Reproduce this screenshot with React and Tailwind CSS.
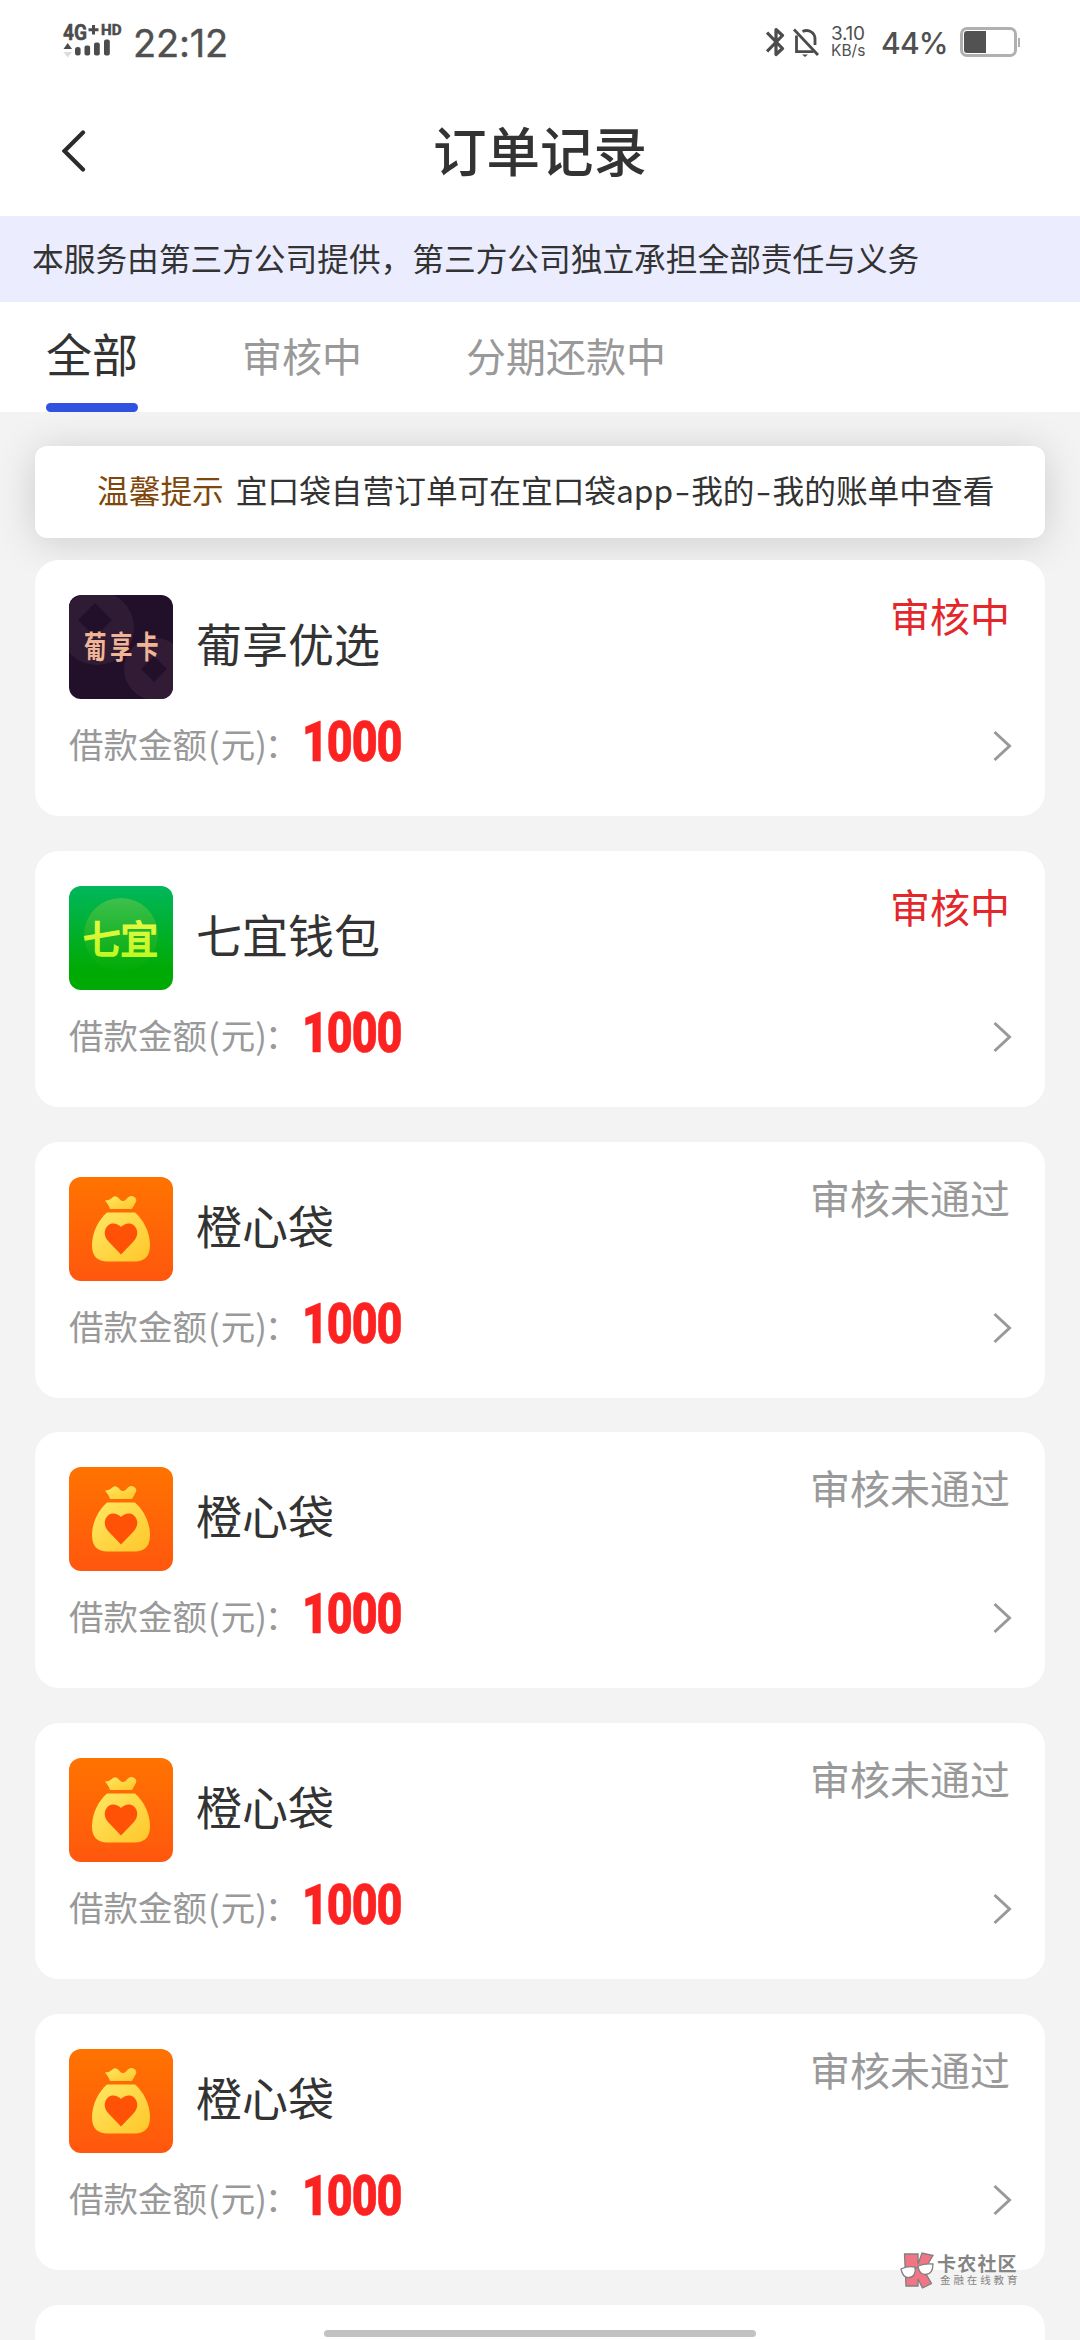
const orders = [
  { id: 1, name: "葡享优选", amount: 1000, status: "审核中", logo: "puxiang" },
  { id: 2, name: "七宜钱包", amount: 1000, status: "审核中", logo: "qiyi" },
  { id: 3, name: "橙心袋", amount: 1000, status: "审核未通过", logo: "chengxin" },
  { id: 4, name: "橙心袋", amount: 1000, status: "审核未通过", logo: "chengxin" },
  { id: 5, name: "橙心袋", amount: 1000, status: "审核未通过", logo: "chengxin" },
  { id: 6, name: "橙心袋", amount: 1000, status: "审核未通过", logo: "chengxin" },
];

const SignalIcon = () => (
  <svg width="60" height="36" viewBox="0 0 60 36" fill="#4c4c4c" className="shrink-0 overflow-visible">
    <g fontFamily="Roboto, sans-serif" fontWeight="700">
      <text x="0" y="15.500" fontSize="21.5" stroke="#4c4c4c" strokeWidth="0.5" textLength="24" lengthAdjust="spacingAndGlyphs">4G</text>
      <text x="38" y="10.500" fontSize="14" stroke="#4c4c4c" strokeWidth="0.5" textLength="20.5" lengthAdjust="spacingAndGlyphs">HD</text>
    </g>
    <path d="M29 1h3v3.300h3.500v3H32v3.200h-3V7.300h-3.500v-3H29z" />
    <path d="M4.700 19 9 25H.5z" />
    <path d="M4.700 33.500 9 28H.5z" fill="#dcdcdc" />
    <rect x="12" y="23" width="5.600" height="8.500" rx="2.500" />
    <rect x="21.500" y="21.500" width="5.600" height="10" rx="2" />
    <rect x="31" y="18.500" width="5.800" height="13" rx="2" />
    <rect x="41" y="15.500" width="5.800" height="16" rx="2" />
  </svg>
);

const StatusBar = () => (
  <div className="flex h-[84px] items-center pl-[63px] pr-[60px] text-[#505050] font-[Inter,'Noto_Sans_CJK_SC',sans-serif]">
    <SignalIcon />
    <span className="ml-[10px] mt-px text-[38px] leading-[40px] tracking-[-0.2px] [-webkit-text-stroke:0.4px_#505050]">22:12</span>

    <div className="ml-auto flex items-center">
      <svg width="19" height="30" viewBox="0 0 19 30" fill="none" stroke="#4c4c4c" strokeWidth="3.200" strokeLinejoin="round">
        <path d="M1 5.500 16.500 21.500 10 27.500V2.500l6.500 6L1 24.500" />
      </svg>
      <svg width="26" height="30" viewBox="0 0 26 30" fill="none" stroke="#4c4c4c" strokeWidth="2.800" className="ml-2">
        <path d="M1 2.500 25 28" />
        <path d="M3.500 8.500v16.200h17" />
        <path d="M9.500 4.500C16 1.500 22 6 22 12v6" />
        <path d="M9 27.500h6L12 30z" fill="#4c4c4c" stroke="none" />
      </svg>
      <div className="ml-[12px] flex w-[36px] flex-col whitespace-nowrap">
        <span className="text-[19px] leading-[17px] tracking-[-0.3px]">3.10</span>
        <span className="text-[15.5px] leading-[17px]">KB/s</span>
      </div>
      <span className="ml-[14px] mt-px w-[66px] whitespace-nowrap text-[30px] font-medium leading-[32px] tracking-[-0.8px]">44%</span>
      <div className="ml-[13px] flex items-center">
        <div className="h-[30px] w-[57px] rounded-[7px] border-[3px] border-[#b0b0b0] p-px">
          <div className="h-[22px] w-[22px] rounded-l-[3px] bg-[#525252]" />
        </div>
        <div className="ml-px h-[9px] w-[2px] bg-[#b0b0b0]" />
      </div>
    </div>
  </div>
);

// 葡享卡
const PuxiangLogo = () => (
  <svg width="104" height="104" viewBox="0 0 104 104">
    <rect width="104" height="104" fill="#22102a" />
    <circle cx="28" cy="33" r="37" fill="#2f1b34" />
    <path d="M26 8 43 25 26 42 9 25z" fill="#22102a" />
    <circle cx="86" cy="74" r="31" fill="#311b35" />
    <path d="M85 61 98 74 85 87 72 74z" fill="#22102a" />
    <g transform="translate(15 63) scale(1 1.350)" fill="#f0b596" fontFamily="'Noto Sans CJK SC', sans-serif" fontWeight="700" fontSize="22.5">
      <text x="0" y="0">葡</text>
      <text x="26" y="0">享</text>
      <text x="52" y="0">卡</text>
    </g>
  </svg>
);

// 七宜钱包
const QiyiLogo = () => (
  <svg width="104" height="104" viewBox="0 0 104 104">
    <defs>
      <linearGradient id="qiyiBg" x1="0" y1="0" x2="0" y2="1">
        <stop offset="0" stopColor="#00b75c" />
        <stop offset="0.800" stopColor="#00aa04" />
      </linearGradient>
      <linearGradient id="qiyiCircle" x1="0" y1="0" x2="0" y2="1">
        <stop offset="0" stopColor="#3cc04e" />
        <stop offset="1" stopColor="#00aa04" />
      </linearGradient>
      <linearGradient id="qiyiText" x1="0" y1="0" x2="0" y2="1">
        <stop offset="0" stopColor="#f3f94e" />
        <stop offset="1" stopColor="#b8f81c" />
      </linearGradient>
    </defs>
    <rect width="104" height="104" fill="url(#qiyiBg)" />
    <circle cx="52" cy="49" r="37" fill="url(#qiyiCircle)" />
    <text
      x="14"
      y="66.500"
      fill="url(#qiyiText)"
      stroke="url(#qiyiText)"
      strokeWidth="1.800"
      fontFamily="'Noto Sans CJK SC', sans-serif"
      fontWeight="400"
      fontSize="37.5"
    >
      七宜
    </text>
  </svg>
);

// 橙心袋
const ChengxinLogo = () => (
  <svg width="104" height="104" viewBox="0 0 104 104">
    <defs>
      <linearGradient id="chengxinBg" x1="0" y1="0" x2="0" y2="1">
        <stop offset="0" stopColor="#ff7300" />
        <stop offset="1" stopColor="#ff570e" />
      </linearGradient>
      <linearGradient id="chengxinBag" x1="0" y1="0" x2="1" y2="1">
        <stop offset="0" stopColor="#ffe863" />
        <stop offset="1" stopColor="#ffc629" />
      </linearGradient>
    </defs>
    <rect width="104" height="104" fill="url(#chengxinBg)" />
    <path
      d="M36 23.500c3 0 5.500-1 8-3.500 2.500-2 5 .5 7 2.500 2.500 2.500 5 1.500 6.500-.5 2.500-3.500 6-4 8.500-1.500 2.500 2.500 1 4.500-.5 7L63 32H41c-1-3.500-3-5.500-5-8.500z"
      fill="url(#chengxinBag)"
    />
    <path d="M38 35.500h28c8 7 15 19 15 33 0 11-6 16-15 16H38c-9 0-15-5-15-16 0-14 7-26 15-33z" fill="url(#chengxinBag)" />
    <path d="M52 77.500 40 65c-6-6-5-13-1-16.500 4-3.500 9.500-2 13 1.500 3.500-3.500 9-5 13-1.500 4 3.500 5 10.500-1 16.500z" fill="#ff5206" />
  </svg>
);

const logos = {
  puxiang: PuxiangLogo,
  qiyi: QiyiLogo,
  chengxin: ChengxinLogo,
};

const OrderCard = ({ order }) => {
  const Logo = logos[order.logo];
  return (
    <div className="h-[256px] shrink-0 rounded-[24px] bg-white pl-[34px] pr-[35px] pt-[35px]">
      <div className="flex h-[104px] items-start">
        <div className="h-[104px] w-[104px] overflow-hidden rounded-[12px]">
          <Logo />
        </div>
        <div className="ml-[23px] text-[46px] leading-[95px] text-[#333]">{order.name}</div>
        <div
          className={`ml-auto text-[40px] leading-[40px] ${order.status === "审核中" ? "text-[#e3272b]" : "text-[#999]"}`}
        >
          {order.status}
        </div>
      </div>

      {/* 借款金额 */}
      <div className="flex h-[88px] items-center">
        <span className="text-[34.5px] leading-[40px] text-[#999]">
          借款金额<span className="mx-[1px]">(</span>元)<span className="-ml-[2px] mr-[4px]">：</span>
        </span>
        <span className="-mt-[2px] -ml-px origin-left scale-x-[0.8] font-[Roboto,sans-serif] text-[56px] font-black leading-[56px] tracking-[-1.4px] text-[#fc2222] [-webkit-text-stroke:0.6px_#fc2222]">
          {order.amount}
        </span>
        <svg width="20" height="32" viewBox="0 0 20 32" fill="none" stroke="#999" strokeWidth="3" className="-mr-[2px] ml-auto mt-[6px]">
          <path d="M2.500 2 17.500 16 2.500 30" />
        </svg>
      </div>
    </div>
  );
};

const Watermark = () => (
  <div className="absolute left-[900px] top-[2252px] flex">
    <svg width="35" height="37" viewBox="0 0 35 37" stroke="#808080" strokeWidth="1.300">
      <path d="M4.500 2H18v10l4-11 11 2.500-9 15 7.500 13L22.500 36 18 27v7H6z" fill="#f07686" />
      <path d="M1 17c4-2 9-3 14-2 1 6-1 10-6 10.500C4 26 2 22 1 17z" fill="#fff" />
      <path d="M18 14c5-2 10-2.500 15-2 0 6-2 10-7 10.500-5 0-7.500-3.500-8-8.500z" fill="#fff" />
      <path d="M15 16.500 18 15" fill="none" />
    </svg>
    <div className="ml-[2px] whitespace-nowrap text-[#858585]">
      <div className="text-[19px] font-bold leading-[22px] tracking-[1.2px]">卡农社区</div>
      <div className="ml-[3px] text-[10.5px] leading-[12px] tracking-[2.9px]">金融在线教育</div>
    </div>
  </div>
);

const App = () => {
  return (
    <div className="relative flex h-[2340px] w-[1080px] flex-col overflow-hidden bg-[#f3f3f3] font-['Noto_Sans_CJK_SC',sans-serif]">
      <div className="relative bg-white z-10">
        <StatusBar />

        {/* 标题栏 */}
        <div className="flex h-[132px] items-start">
          <svg width="24" height="42" viewBox="0 0 24 42" fill="none" stroke="#2b2b2b" strokeWidth="4.200" strokeLinecap="round" className="ml-[62px] mt-[46px]">
            <path d="M21 2.500 2.500 21 21 39.500" />
          </svg>
          <h1 className="mr-[86px] flex-1 text-center text-[53.5px] font-medium leading-[130px] text-[#333]">订单记录</h1>
        </div>

        <div className="h-[86px] bg-[#ebedfe] pl-[32px] text-[31.7px] leading-[82px] text-[#333]">
          本服务由第三方公司提供，第三方公司独立承担全部责任与义务
        </div>

        {/* 订单状态 */}
        <div className="flex h-[110px] pl-[46px] text-[40px] leading-[107px] text-[#999]">
          <div className="flex w-[92px] flex-col">
            <span className="h-[101px] text-[46px] leading-[101px] text-[#333]">全部</span>
            <span className="h-[9px] rounded-full bg-[#3151e0]" />
          </div>
          <span className="ml-[104px]">审核中</span>
          <span className="ml-[104px]">分期还款中</span>
        </div>
      </div>

      {/* 温馨提示 */}
      <div className="mx-[35px] mt-[34px] h-[92px] shrink-0 whitespace-nowrap rounded-[12px] bg-white pl-[62px] text-[31.7px] leading-[87px] text-[#333] shadow-[0_4px_40px_rgba(0,0,0,0.16)]">
        <span className="mr-[12px] text-[#7e470b]">温馨提示</span>
        宜口袋自营订单可在宜口袋app
        <span className="mx-[3.5px] inline-block scale-x-[1.4]">-</span>我的
        <span className="mx-[3.5px] inline-block scale-x-[1.4]">-</span>我的账单中查看
      </div>

      <div className="relative mx-[35px] mt-[22px] flex flex-col gap-[34.83px]">
        {orders.map((order) => (
          <OrderCard key={order.id} order={order} />
        ))}
        <div className="h-[256px] rounded-[24px] bg-white" />
      </div>

      <Watermark />
      <div className="absolute bottom-[3px] left-[324px] h-[7px] w-[432px] rounded-full bg-[#c2c2c2]" />
    </div>
  );
};

export default App;
